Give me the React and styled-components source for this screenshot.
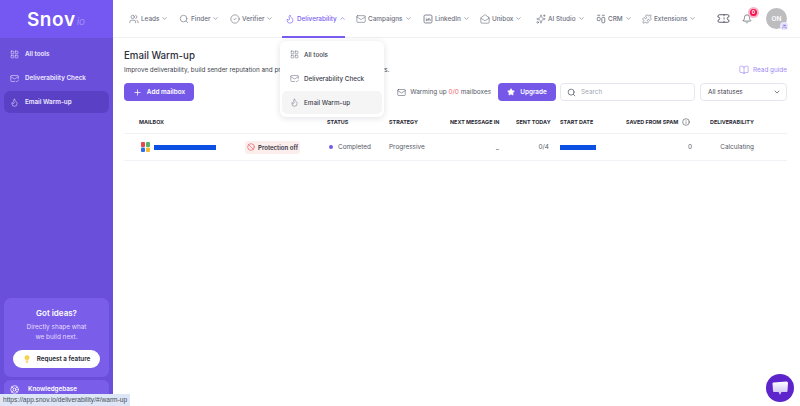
import React from 'react'
import styled, { createGlobalStyle } from 'styled-components'
import {
  Users, Search, CircleCheck, Flame, Mail, MailOpen, Sparkles, Puzzle,
  ChevronDown, ChevronUp, Ticket, Bell, LayoutGrid, MailCheck, Plus, Star, BookOpen,
  Info, Ban, Lightbulb, LifeBuoy,
} from 'lucide-react'

const LinkedinBox = ({ size }) => (
  <svg width={size} height={size} viewBox="0 0 24 24" fill="none" stroke="currentColor" strokeWidth="2">
    <rect x="2.5" y="2.5" width="19" height="19" rx="3" />
    <path d="M8 11v6M8 7.5v.5M12 17v-6M12 14c0-4 5-4 5 0v3" />
  </svg>
)

const CrmBoard = ({ size }) => (
  <svg width={size} height={size} viewBox="0 0 24 24" fill="none" stroke="currentColor" strokeWidth="2">
    <path d="M3 3h7M14 3h7" />
    <rect x="3" y="8" width="7" height="8" rx="2" />
    <rect x="14" y="8" width="7" height="13" rx="2" />
  </svg>
)

const GoogleTile = () => (
  <svg width="9" height="10" viewBox="0 0 9 10">
    <rect x="0" y="0" width="4" height="5" rx="1" fill="#e5484d" />
    <rect x="5" y="0" width="4" height="5" rx="1" fill="#58b368" />
    <rect x="0" y="5.5" width="4" height="4.5" rx="1" fill="#2f6fe4" />
    <rect x="5" y="5.5" width="4" height="4.5" rx="1" fill="#f4b931" />
  </svg>
)

const ChatGlyph = () => (
  <svg width="16" height="15" viewBox="0 0 16 15">
    <defs>
      <linearGradient id="chatFill" x1="0" y1="0" x2="0" y2="1">
        <stop offset="0" stopColor="#ffffff" />
        <stop offset="1" stopColor="#c9b8f2" />
      </linearGradient>
    </defs>
    <path d="M1.5 1.5 L14.5 0.5 Q16 0.5 16 2 L15.5 10 Q15.5 11 14.5 11 L9.5 11 L8 14 L6.5 11 L2 11 Q1 11 1 10 L0.5 2.5 Q0.5 1.5 1.5 1.5 Z" fill="url(#chatFill)" />
  </svg>
)

const navItems = [
  { label: 'Leads', icon: Users, width: 50 },
  { label: 'Finder', icon: Search, width: 51 },
  { label: 'Verifier', icon: CircleCheck, width: 55 },
  { label: 'Deliverability', icon: Flame, width: 71, active: true },
  { label: 'Campaigns', icon: Mail, width: 67 },
  { label: 'LinkedIn', icon: LinkedinBox, width: 57 },
  { label: 'Unibox', icon: MailOpen, width: 56 },
  { label: 'AI Studio', icon: Sparkles, width: 60 },
  { label: 'CRM', icon: CrmBoard, width: 46 },
  { label: 'Extensions', icon: Puzzle, width: 60 },
]

const sideItems = [
  { label: 'All tools', icon: LayoutGrid },
  { label: 'Deliverability Check', icon: MailCheck },
  { label: 'Email Warm-up', icon: Flame, active: true },
]

const GlobalStyle = createGlobalStyle`
  html, body { margin: 0; height: 100%; overflow: hidden; background: #fff; }
  body { font-family: Inter, "Liberation Sans", sans-serif; color: #2f3140; }
  #root { height: 100%; }
`

const Page = styled.div`
  position: relative;
  display: flex;
  width: 800px;
  height: 406px;
  overflow: hidden;
`

const Sidebar = styled.aside`
  flex: 0 0 113px;
  display: flex;
  flex-direction: column;
  background: #6a4fdb;
`

const Logo = styled.div`
  height: 38px;
  flex: none;
  display: flex;
  align-items: center;
  justify-content: center;
  padding-right: 1px;
  background: #7558f2;
  color: #fff;
  font-size: 19px;
  font-weight: 600;
  letter-spacing: 0.6px;
  em { font-size: 10px; font-weight: 400; color: #a28ef5; margin-left: 1px; padding-top: 4px; letter-spacing: 0; }
`

const SideList = styled.nav`
  display: flex;
  flex-direction: column;
  padding: 5px 4px 0;
  gap: 2px;
`

const SideLink = styled.div`
  height: 22px;
  display: flex;
  align-items: center;
  gap: 6px;
  padding-left: 6px;
  border-radius: 6px;
  color: #efeaff;
  font-size: 6.3px;
  font-weight: 600;
  background: ${p => (p.$active ? '#5a40c4' : 'transparent')};
  svg { flex: none; }
`

const IdeasCard = styled.div`
  margin: auto 4px 0;
  height: 79px;
  flex: none;
  border-radius: 7px;
  background: #7a5ee9;
  display: flex;
  flex-direction: column;
  align-items: center;
  color: #fff;
  padding-top: 10px;
  box-sizing: border-box;
  h4 { margin: 0 0 4px; font-size: 8px; line-height: 10px; font-weight: 600; }
  p { margin: 0; font-size: 6.4px; line-height: 10px; color: #e4dcff; text-align: center; }
`

const RequestButton = styled.div`
  margin-top: 8px;
  width: 87px;
  height: 18px;
  flex: none;
  border-radius: 9px;
  background: #fff;
  color: #24252f;
  font-size: 6.3px;
  font-weight: 600;
  display: flex;
  align-items: center;
  justify-content: center;
  gap: 6px;
`

const KnowledgeCard = styled.div`
  margin: 3px 4px -2px;
  height: 28px;
  flex: none;
  border-radius: 6px 6px 0 0;
  background: #7a5ee9;
  color: #fff;
  font-size: 6.3px;
  font-weight: 600;
  display: flex;
  align-items: flex-start;
  gap: 9px;
  padding: 5px 0 0 6px;
  box-sizing: border-box;
  line-height: 9px;
`

const Main = styled.main`
  flex: 1;
  min-width: 0;
  display: flex;
  flex-direction: column;
`

const TopBar = styled.header`
  height: 38px;
  flex: none;
  box-sizing: border-box;
  border-bottom: 1px solid #eef0f3;
  display: flex;
  align-items: stretch;
  padding-left: 16px;
`

const NavItem = styled.div`
  flex: 0 0 ${p => p.$width}px;
  display: flex;
  align-items: center;
  gap: 2px;
  color: ${p => (p.$active ? '#7a5cf0' : '#6d7080')};
  font-size: 6.4px;
  font-weight: 500;
  position: relative;
  white-space: nowrap;
  &::after {
    content: '';
    display: ${p => (p.$active ? 'block' : 'none')};
    position: absolute;
    left: -3px;
    width: 63px;
    bottom: -1px;
    height: 2px;
    background: #7a5cf0;
  }
`

const TopRight = styled.div`
  margin-left: auto;
  display: flex;
  align-items: center;
  gap: 12px;
  padding-right: 13px;
  color: #4a4d5c;
`

const BellWrap = styled.div`
  position: relative;
  display: flex;
  margin-right: 2px;
`

const BellBadge = styled.span`
  position: absolute;
  top: -5px;
  right: -5px;
  width: 7px;
  height: 7px;
  border-radius: 50%;
  background: #f3124e;
  box-shadow: 0 0 0 2px #f9b5c8;
  color: #fff;
  font-size: 5px;
  font-weight: 700;
  line-height: 7px;
  text-align: center;
`

const Avatar = styled.div`
  position: relative;
  width: 21px;
  height: 21px;
  border-radius: 50%;
  background: #bdbdc0;
  color: #fff;
  font-size: 6.5px;
  font-weight: 600;
  display: flex;
  align-items: center;
  justify-content: center;
`

const AvatarTag = styled.span`
  position: absolute;
  right: -1px;
  bottom: -1px;
  width: 8px;
  height: 8px;
  border-radius: 50%;
  background: #e9e6fb;
  color: #6a4fdb;
  display: flex;
  align-items: center;
  justify-content: center;
`

const Content = styled.section`
  flex: 1;
  padding: 12px 13px 0 11px;
`

const TitleRow = styled.div`
  display: flex;
  justify-content: space-between;
  align-items: flex-end;
`

const Title = styled.h1`
  margin: 0;
  font-size: 9.7px;
  line-height: 12px;
  font-weight: 500;
  color: #2d2f3c;
`

const Subtitle = styled.p`
  margin: 3px 0 0;
  font-size: 6.3px;
  line-height: 10px;
  color: #3d3f4d;
`

const GuideLink = styled.div`
  display: flex;
  align-items: center;
  gap: 4px;
  font-size: 6.4px;
  line-height: 10px;
  color: #9d87f5;
`

const Toolbar = styled.div`
  margin-top: 8px;
  display: flex;
  align-items: center;
  height: 18px;
`

const PrimaryButton = styled.div`
  height: 18px;
  width: ${p => p.$width}px;
  border-radius: 4px;
  background: #7558e8;
  color: #fff;
  font-size: 6.4px;
  font-weight: 600;
  display: flex;
  align-items: center;
  justify-content: center;
  gap: 5px;
`

const WarmupNote = styled.div`
  margin-left: auto;
  margin-right: 7px;
  display: flex;
  align-items: center;
  gap: 4px;
  font-size: 6.4px;
  color: #565967;
  b { color: #f0616d; font-weight: 400; }
`

const SearchBox = styled.div`
  margin-left: 4px;
  width: 135px;
  height: 18px;
  box-sizing: border-box;
  border: 1px solid #e6e7ee;
  border-radius: 4px;
  display: flex;
  align-items: center;
  gap: 5px;
  padding-left: 6px;
  font-size: 6.4px;
  color: #a5a7b2;
  svg { color: #555866; }
`

const StatusSelect = styled.div`
  margin-left: 5px;
  width: 87px;
  height: 18px;
  box-sizing: border-box;
  border: 1px solid #e6e7ee;
  border-radius: 4px;
  display: flex;
  align-items: center;
  justify-content: space-between;
  padding: 0 5px 0 7px;
  font-size: 6.4px;
  color: #3f4250;
`

const columns = '15px 188px 62px 61px 66px 44px 66px 84px 77px'

const TableHead = styled.div`
  margin-top: 10px;
  height: 22px;
  box-sizing: content-box;
  display: grid;
  grid-template-columns: ${columns};
  align-items: center;
  font-size: 5.4px;
  font-weight: 700;
  color: #2b2c36;
  white-space: nowrap;
  border-bottom: 1px solid #f1f2f5;
`

const TableRow = styled.div`
  height: 26px;
  display: grid;
  grid-template-columns: ${columns};
  align-items: center;
  font-size: 6.4px;
  color: #565967;
  border-bottom: 1px solid #f1f2f5;
  white-space: nowrap;
`

const HeadCell = styled.div`
  grid-column: ${p => p.$col};
  display: flex;
  align-items: center;
  gap: 4px;
`

const MailCell = styled.div`
  grid-column: 2;
  display: flex;
  align-items: center;
  justify-content: space-between;
  padding: 0 27px 0 2px;
`

const MailAddress = styled.div`
  display: flex;
  align-items: center;
  gap: 4px;
`

const Redacted = styled.span`
  display: block;
  width: ${p => p.$width}px;
  height: 5px;
  background: #0b4fe3;
`

const ProtectionTag = styled.div`
  height: 13px;
  width: 55px;
  border-radius: 3px;
  background: #fdeeee;
  color: #33343f;
  font-size: 6.1px;
  font-weight: 600;
  display: flex;
  align-items: center;
  justify-content: center;
  gap: 3px;
  svg { color: #ee5a5f; }
`

const StatusCell = styled.div`
  display: flex;
  align-items: center;
  gap: 5px;
  &::before {
    content: '';
    width: 4px;
    height: 4px;
    margin-left: 2px;
    border-radius: 50%;
    background: #7558e8;
  }
`

const RightCell = styled.div`
  text-align: right;
  padding-right: ${p => p.$pad || 0}px;
`

const Dropdown = styled.div`
  position: absolute;
  left: 280px;
  top: 41px;
  width: 104px;
  height: 76px;
  box-sizing: border-box;
  padding: 2px;
  border-radius: 6px;
  background: #fff;
  box-shadow: 0 1px 6px rgba(40, 40, 70, 0.14);
  display: flex;
  flex-direction: column;
  gap: 1px;
`

const DropItem = styled.div`
  height: 23px;
  display: flex;
  align-items: center;
  gap: 5px;
  padding-left: 8px;
  border-radius: 5px;
  font-size: 6.3px;
  font-weight: 500;
  color: #3b3d4a;
  background: ${p => (p.$active ? '#f5f5f6' : 'transparent')};
  svg { color: #707382; flex: none; }
`

const UrlTip = styled.div`
  position: absolute;
  left: 0;
  bottom: 0;
  height: 12px;
  width: 130px;
  padding-left: 3px;
  box-sizing: border-box;
  background: #dce6f6;
  color: #4a4e5a;
  font-family: "Liberation Sans", sans-serif;
  font-size: 6.6px;
  line-height: 12px;
  white-space: nowrap;
`

const ChatBubble = styled.div`
  position: absolute;
  left: 766px;
  top: 374px;
  width: 28px;
  height: 28px;
  border-radius: 50%;
  background: #5c24ca;
  display: flex;
  align-items: center;
  justify-content: center;
`

const App = () => (
  <>
    <GlobalStyle />
    <Page>
      <Sidebar>
        <Logo>Snov<em>io</em></Logo>
        <SideList>
          {sideItems.map(({ label, icon: Icon, active }) => (
            <SideLink key={label} $active={active}>
              <Icon size={9} strokeWidth={1.5} />
              {label}
            </SideLink>
          ))}
        </SideList>
        <IdeasCard>
          <h4>Got ideas?</h4>
          <p>Directly shape what<br />we build next.</p>
          <RequestButton>
            <Lightbulb size={8} color="#f2b705" fill="#f9d648" />
            Request a feature
          </RequestButton>
        </IdeasCard>
        <KnowledgeCard>
          <LifeBuoy size={9} />
          Knowledgebase
        </KnowledgeCard>
      </Sidebar>

      <Main>
        <TopBar>
          {navItems.map(({ label, icon: Icon, active, width }) => (
            <NavItem key={label} $active={active} $width={width}>
              <Icon size={10} strokeWidth={1.5} />
              {label}
              {active ? <ChevronUp size={7} /> : <ChevronDown size={7} />}
            </NavItem>
          ))}
          <TopRight>
            <Ticket size={13} strokeWidth={1.6} />
            <BellWrap>
              <Bell size={10} strokeWidth={1.6} />
              <BellBadge>0</BellBadge>
            </BellWrap>
            <Avatar>
              ON
              <AvatarTag><Users size={5} /></AvatarTag>
            </Avatar>
          </TopRight>
        </TopBar>

        <Content>
          <TitleRow>
            <div>
              <Title>Email Warm-up</Title>
              <Subtitle>Improve deliverability, build sender reputation and protect your emails from spam folders.</Subtitle>
            </div>
            <GuideLink>
              <BookOpen size={10} strokeWidth={1.5} />
              Read guide
            </GuideLink>
          </TitleRow>

          <Toolbar>
            <PrimaryButton $width={70}>
              <Plus size={9} />
              Add mailbox
            </PrimaryButton>
            <WarmupNote>
              <Mail size={9} strokeWidth={1.5} />
              <span>Warming up <b>0/0</b> mailboxes</span>
            </WarmupNote>
            <PrimaryButton $width={58}>
              <Star size={8} fill="#fff" />
              Upgrade
            </PrimaryButton>
            <SearchBox>
              <Search size={9} />
              Search
            </SearchBox>
            <StatusSelect>
              All statuses
              <ChevronDown size={8} />
            </StatusSelect>
          </Toolbar>

          <TableHead>
            <HeadCell $col={2}>MAILBOX</HeadCell>
            <HeadCell $col={3}>STATUS</HeadCell>
            <HeadCell $col={4}>STRATEGY</HeadCell>
            <HeadCell $col={5}>NEXT MESSAGE IN</HeadCell>
            <HeadCell $col={6}>SENT TODAY</HeadCell>
            <HeadCell $col={7}>START DATE</HeadCell>
            <HeadCell $col={8}>SAVED FROM SPAM <Info size={8} strokeWidth={1.5} /></HeadCell>
            <HeadCell $col={9}>DELIVERABILITY</HeadCell>
          </TableHead>
          <TableRow>
            <MailCell>
              <MailAddress>
                <GoogleTile />
                <Redacted $width={62} />
              </MailAddress>
              <ProtectionTag>
                <Ban size={8} />
                Protection off
              </ProtectionTag>
            </MailCell>
            <StatusCell>Completed</StatusCell>
            <div>Progressive</div>
            <RightCell $pad={17}>_</RightCell>
            <RightCell $pad={11}>0/4</RightCell>
            <Redacted $width={36} />
            <RightCell $pad={18}>0</RightCell>
            <RightCell $pad={33}>Calculating</RightCell>
          </TableRow>
        </Content>
      </Main>

      <Dropdown>
        <DropItem>
          <LayoutGrid size={9} strokeWidth={1.5} />
          All tools
        </DropItem>
        <DropItem>
          <MailCheck size={9} strokeWidth={1.5} />
          Deliverability Check
        </DropItem>
        <DropItem $active>
          <Flame size={9} strokeWidth={1.5} />
          Email Warm-up
        </DropItem>
      </Dropdown>

      <UrlTip>https://app.snov.io/deliverability/#/warm-up</UrlTip>
      <ChatBubble>
        <ChatGlyph />
      </ChatBubble>
    </Page>
  </>
)

export default App
